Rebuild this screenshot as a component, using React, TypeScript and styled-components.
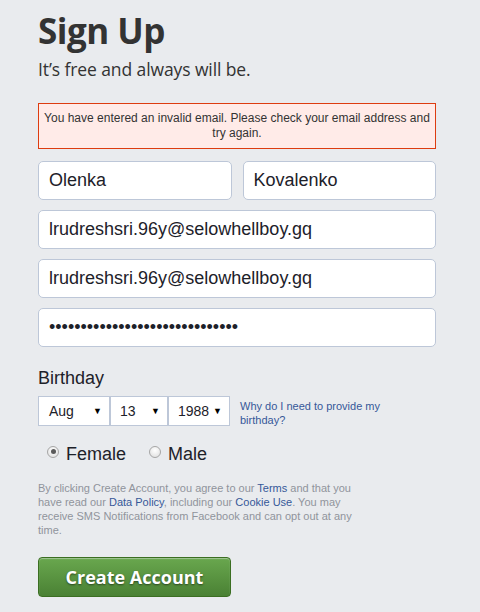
import React from "react";
import styled, { createGlobalStyle } from "styled-components";

const Global = createGlobalStyle`
  html, body { margin: 0; padding: 0; background: #e9ebee; }
  body { font-family: "Liberation Sans", Arial, sans-serif; }
`;

const Page = styled.div`
  width: 480px;
  min-height: 612px;
  box-sizing: border-box;
  padding: 11px 44px 0 38px;
  display: flex;
  flex-direction: column;
`;

const Title = styled.h1`
  margin: 0;
  font-family: "Open Sans", sans-serif;
  font-weight: 700;
  font-size: 35px;
  line-height: 40px;
  color: #333;
  letter-spacing: -0.5px;
`;

const Subtitle = styled.div`
  margin-top: 7px;
  font-family: "Open Sans", sans-serif;
  font-size: 17.5px;
  line-height: 22px;
  color: #333;
  letter-spacing: -0.1px;
`;

const ErrorBox = styled.div`
  margin-top: 23px;
  border: 1px solid #dd3c10;
  background: #ffebe8;
  padding: 7px 4px 7px;
  font-size: 12px;
  line-height: 15px;
  color: #333;
  text-align: center;
`;

const Fields = styled.div`
  margin-top: 12px;
  display: flex;
  flex-direction: column;
  gap: 10px;
`;

const Row = styled.div`
  display: flex;
  gap: 11px;
`;

const Input = styled.input<{ $half?: boolean }>`
  ${(p) => (p.$half ? "flex: 1 1 0;" : "width: 100%;")}
  min-width: 0;
  height: 39px;
  box-sizing: border-box;
  border: 1px solid #bdc7d8;
  border-radius: 5px;
  background: #fff;
  padding: 0 10px;
  font-family: "Liberation Sans", Arial, sans-serif;
  font-size: 18px;
  color: #1d2129;
  outline: none;
`;

const Label = styled.div`
  margin-top: 21px;
  font-size: 18px;
  line-height: 21px;
  color: #1d2129;
`;

const BirthRow = styled.div`
  margin-top: 7px;
  display: flex;
  align-items: flex-start;
`;

const Selects = styled.div`
  display: flex;
  border: 1px solid #bdc7d8;
  background: #fff;
  height: 30px;
  box-sizing: border-box;
`;

const Select = styled.div<{ $w: number; $pl: number }>`
  width: ${(p) => p.$w}px;
  box-sizing: border-box;
  display: flex;
  align-items: center;
  justify-content: space-between;
  padding: 0 7px 0 ${(p) => p.$pl}px;
  font-size: 14px;
  color: #1d2129;
  & + & { border-left: 2px solid #bdc7d8; }
`;

const Arrow = styled.span`
  font-size: 9px;
  color: #000;
`;

const WhyLink = styled.a`
  margin: 3px 0 0 10px;
  width: 160px;
  font-size: 11px;
  line-height: 14px;
  color: #365899;
  text-decoration: none;
`;

const Genders = styled.div`
  margin-top: 17px;
  display: flex;
  align-items: center;
  padding-left: 9px;
  gap: 23px;
`;

const Gender = styled.label`
  display: flex;
  align-items: center;
  gap: 7px;
  font-size: 18px;
  line-height: 21px;
  color: #1d2129;
`;

const Radio = styled.span<{ $checked?: boolean }>`
  width: 12px;
  height: 12px;
  box-sizing: border-box;
  border-radius: 50%;
  border: 1px solid #a6a6a6;
  background: radial-gradient(circle at 50% 35%, #ffffff, #dcdcdc);
  display: flex;
  align-items: center;
  justify-content: center;
  margin-top: -6px;
  &::after {
    content: "";
    width: 5px;
    height: 5px;
    border-radius: 50%;
    background: ${(p) => (p.$checked ? "#5a5a5a" : "transparent")};
  }
`;

const Terms = styled.p`
  margin: 16px 0 0;
  width: 330px;
  font-size: 11px;
  line-height: 14px;
  color: #90949c;
`;

const TLink = styled.a`
  color: #365899;
  text-decoration: none;
`;

const Button = styled.button`
  margin-top: 20px;
  width: 193px;
  height: 40px;
  box-sizing: border-box;
  border: 1px solid #3b6e22;
  border-radius: 4px;
  background: linear-gradient(#69a74e, #4a8134);
  box-shadow: inset 0 1px 1px #a3c796;
  color: #fff;
  font-family: "Open Sans", sans-serif;
  font-weight: 700;
  font-size: 18px;
  text-shadow: 0 1px 2px rgba(0, 0, 0, 0.5);
  cursor: pointer;
  padding: 0;
`;

export default function App() {
  return (
    <>
      <Global />
      <Page>
        <Title>Sign Up</Title>
        <Subtitle>It’s free and always will be.</Subtitle>
        <ErrorBox>
          You have entered an invalid email. Please check your email address and try again.
        </ErrorBox>
        <Fields>
          <Row>
            <Input $half defaultValue="Olenka" />
            <Input $half defaultValue="Kovalenko" />
          </Row>
          <Input defaultValue="lrudreshsri.96y@selowhellboy.gq" />
          <Input defaultValue="lrudreshsri.96y@selowhellboy.gq" />
          <Input type="password" defaultValue="abcdefghijklmnopqrstuvwxyz1234" />
        </Fields>
        <Label>Birthday</Label>
        <BirthRow>
          <Selects>
            <Select $w={70} $pl={10}>
              Aug<Arrow>▼</Arrow>
            </Select>
            <Select $w={58} $pl={9}>
              13<Arrow>▼</Arrow>
            </Select>
            <Select $w={62} $pl={9}>
              1988<Arrow>▼</Arrow>
            </Select>
          </Selects>
          <WhyLink href="#">Why do I need to provide my birthday?</WhyLink>
        </BirthRow>
        <Genders>
          <Gender>
            <Radio $checked />
            Female
          </Gender>
          <Gender>
            <Radio />
            Male
          </Gender>
        </Genders>
        <Terms>
          By clicking Create Account, you agree to our <TLink href="#">Terms</TLink> and that you
          have read our <TLink href="#">Data Policy</TLink>, including our{" "}
          <TLink href="#">Cookie Use</TLink>. You may receive SMS Notifications from Facebook and
          can opt out at any time.
        </Terms>
        <Button>Create Account</Button>
      </Page>
    </>
  );
}
